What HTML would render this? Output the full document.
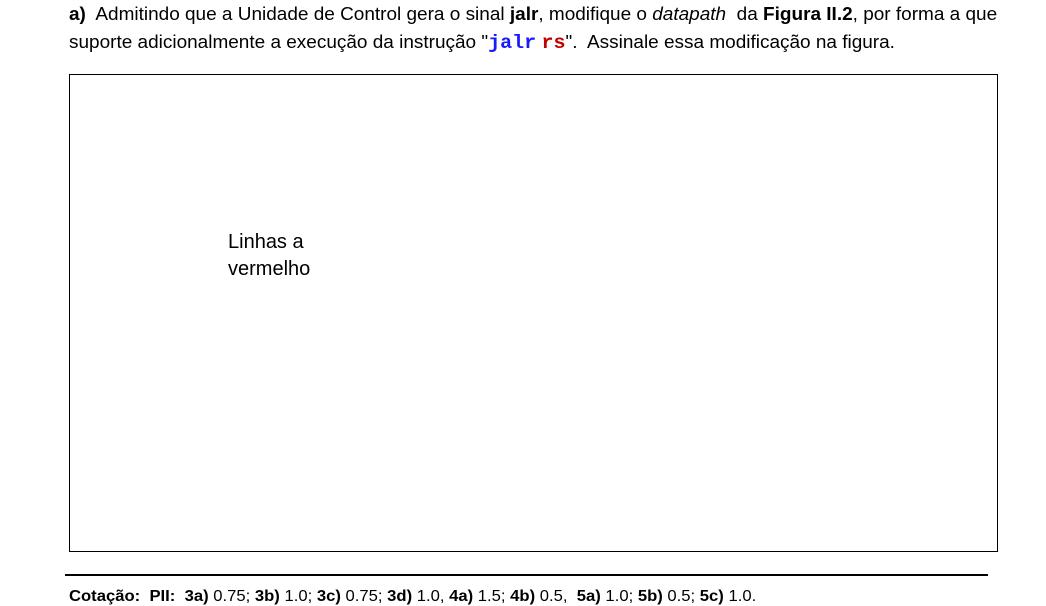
<!DOCTYPE html>
<html><head><meta charset="utf-8"><style>
body{margin:0;width:1046px;height:599px;overflow:hidden;background:#fff;font-family:"Liberation Sans",sans-serif;color:#000;position:relative}
.l{position:absolute;left:69px;white-space:nowrap;font-size:18px;transform-origin:left top;transform:scaleX(1.054)}
code{font-family:"Liberation Mono",monospace;font-weight:bold;font-size:19px}
.box{position:absolute;left:69px;top:74px;width:927px;height:476px;border:1.5px solid #000}
.t{position:absolute;left:228px;top:229px;font-size:20px;line-height:27px}
.hr{position:absolute;left:65px;top:574px;width:923px;height:1.5px;background:#000}
.f{position:absolute;left:69px;top:588px;font-size:16px;white-space:nowrap;transform-origin:left top;transform:scaleX(1.04)}
</style></head><body>
<div class="l" style="top:4px"><b>a)</b>&nbsp; Admitindo que a Unidade de Control gera o sinal <b>jalr</b>, modifique o <i>datapath</i>&nbsp; da <b>Figura II.2</b>, por forma a que</div>
<div class="l" style="top:32px">suporte adicionalmente a execução da instrução "<code style="color:#1a1aff">jalr</code>&nbsp;<code style="color:#c00000">rs</code>".&nbsp; Assinale essa modificação na figura.</div>
<div class="box"></div>
<div class="t">Linhas a<br>vermelho</div>
<div class="hr"></div>
<div class="f"><b>Cotação:&nbsp; PII:&nbsp; 3a)</b> 0.75; <b>3b)</b> 1.0; <b>3c)</b> 0.75; <b>3d)</b> 1.0, <b>4a)</b> 1.5; <b>4b)</b> 0.5,&nbsp; <b>5a)</b> 1.0; <b>5b)</b> 0.5; <b>5c)</b> 1.0.</div>
</body></html>
